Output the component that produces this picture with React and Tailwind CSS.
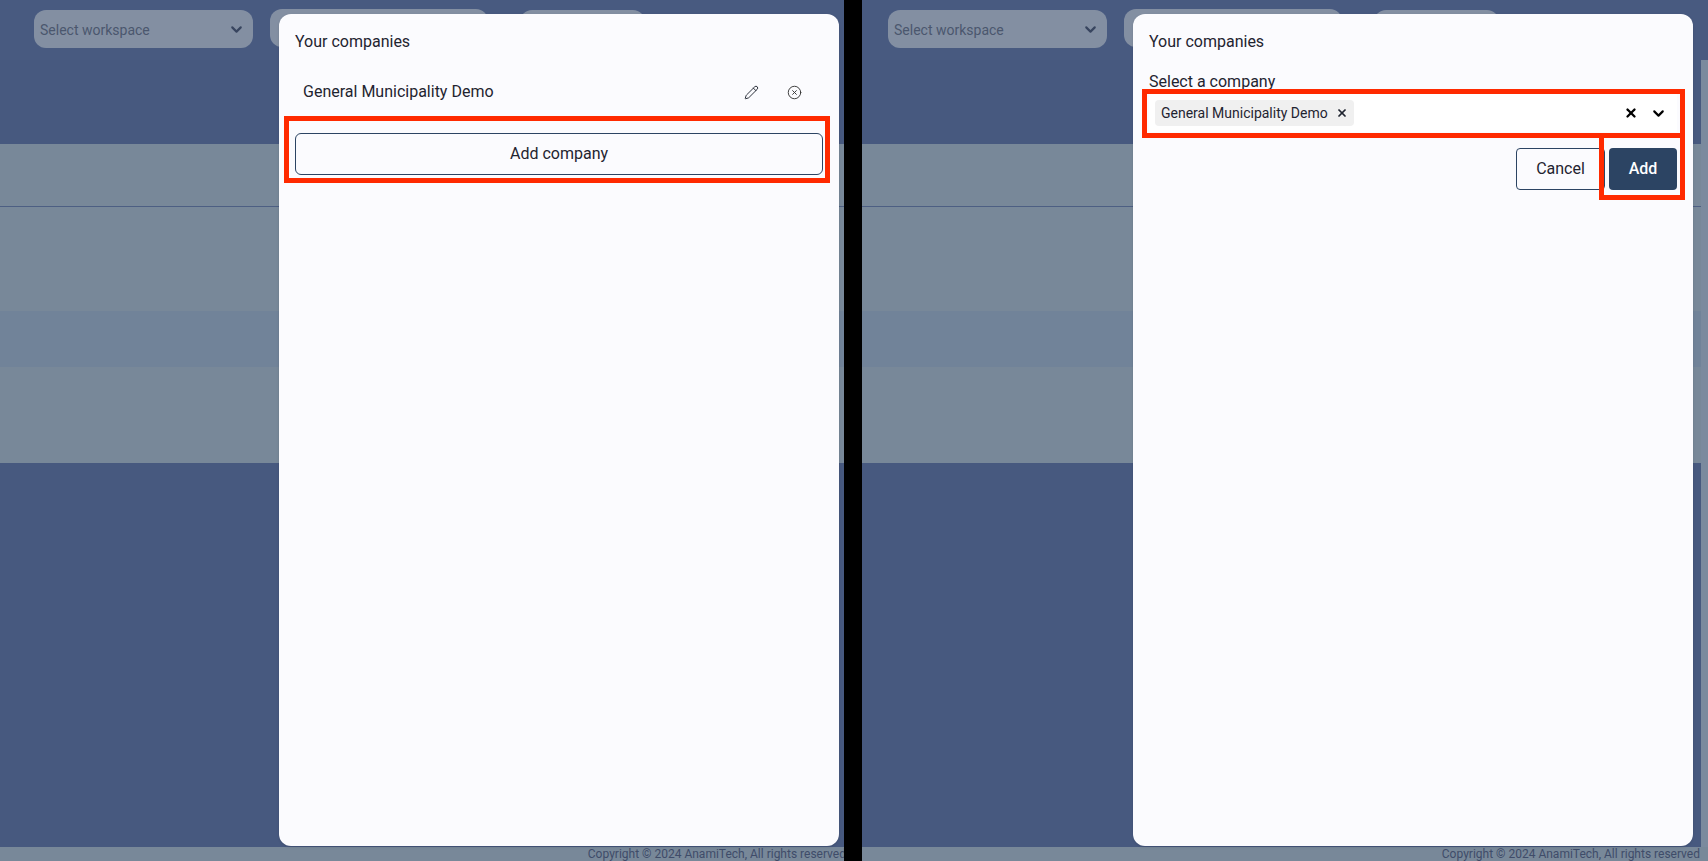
import { ChevronDown, CircleX, Pencil, X } from 'lucide-react';

function SelectStub({ className, label }) {
  return (
    <div className={`h-[38px] rounded-xl bg-[#838fa2] flex items-center justify-between pl-1.5 pr-[8px] ${className}`}>
      {label && <span className="text-[14px] pt-[3px] text-[#4b576e]">{label}</span>}
      {label && <ChevronDown size={17} strokeWidth={3} className="text-[#38455f]" />}
    </div>
  );
}

// the dimmed page behind the modal
function Backdrop() {
  return (
    <div className="h-full flex flex-col bg-[#47597f]">
      <div className="h-[60px] shrink-0 flex items-start pl-[34px] pt-[10px] bg-[#485a80]">
        <SelectStub className="w-[219px]" label="Select workspace" />
        <SelectStub className="w-[218px] ml-[17px] -mt-px" />
        <SelectStub className="w-[125px] ml-[32px]" />
      </div>
      <div className="flex-1 flex">
        <div className="flex-1 flex flex-col">
          <div className="h-[84px]" />
          <div className="h-[63px] bg-[#788899] border-b border-[#4d5f83]" />
          <div className="h-[104px] bg-[#788899]" />
          <div className="h-[56px] bg-[#718399]" />
          <div className="h-[96px] bg-[#788899]" />
          <div className="flex-1" />
        </div>
        <div className="w-[7px] bg-[#7b8a9e]" />
      </div>
      <div className="h-[14px] shrink-0 bg-[#788899] text-right pr-2 text-[12px] leading-[14px] text-[#3f4c69] whitespace-nowrap">
        Copyright © 2024 AnamiTech, All rights reserved
      </div>
    </div>
  );
}

function Modal({ children }) {
  return (
    <div className="absolute left-[279px] top-[14px] w-[560px] h-[832px] rounded-xl bg-[#fbfbfe] shadow-sm p-4 pt-4 text-[16px] leading-6 text-[#1f2430]">
      <p>Your companies</p>
      {children}
    </div>
  );
}

function CompaniesList() {
  return (
    <Modal>
      <div className="h-[44px] mt-4 pl-2 flex items-center">
        <span className="flex-1">General Municipality Demo</span>
        <Pencil size={15} strokeWidth={1.5} className="mr-[28px]" />
        <CircleX size={15} strokeWidth={1.5} className="mr-[21px] text-[#333]" />
      </div>
      <button className="w-full h-[42px] mt-[19px] rounded-md border border-[#2c4463] bg-[#fbfbfe] text-[16px]">
        Add company
      </button>
    </Modal>
  );
}

function AddCompanyForm() {
  return (
    <Modal>
      <p className="mt-4">Select a company</p>
      <div className="h-[38px] bg-white flex items-center pl-1.5 pr-[10px]">
        <div className="h-[26px] w-[199px] bg-[#f0f0f0] rounded-sm flex items-center justify-between pl-1.5 pr-[6px] text-[14px]">
          <span>General Municipality Demo</span>
          <X size={12} strokeWidth={3.5} />
        </div>
        <X size={14} strokeWidth={4} className="ml-auto text-black" />
        <ChevronDown size={17} strokeWidth={3} className="ml-[12px] text-black" />
      </div>
      <div className="mt-4 flex justify-end gap-1">
        <button className="w-[89px] h-[42px] rounded-sm border border-[#2c4463] bg-[#fbfbfe] text-[16px]">Cancel</button>
        <button className="w-[68px] h-[42px] rounded-sm bg-[#2c4463] text-white text-[16px] font-medium">Add</button>
      </div>
    </Modal>
  );
}

function Highlight({ className }) {
  return <div className={`absolute border-[5px] border-[#ff2a00] ${className}`} />;
}

export default function App() {
  return (
    <div className="w-[1708px] h-[861px] flex overflow-hidden bg-black font-['Roboto',sans-serif]">
      <div className="w-[844px] h-full overflow-hidden">
        <div className="relative w-[854px] h-full">
          <Backdrop />
          <CompaniesList />
          <Highlight className="left-[284px] top-[116px] w-[546px] h-[67px]" />
        </div>
      </div>
      <div className="w-[18px] h-full bg-black" />
      <div className="w-[846px] h-full overflow-hidden">
        <div className="relative w-[854px] h-full -ml-2">
          <Backdrop />
          <AddCompanyForm />
          <Highlight className="left-[288px] top-[89px] w-[543px] h-[49px]" />
          <Highlight className="left-[745px] top-[133px] w-[86px] h-[67px]" />
        </div>
      </div>
    </div>
  );
}
